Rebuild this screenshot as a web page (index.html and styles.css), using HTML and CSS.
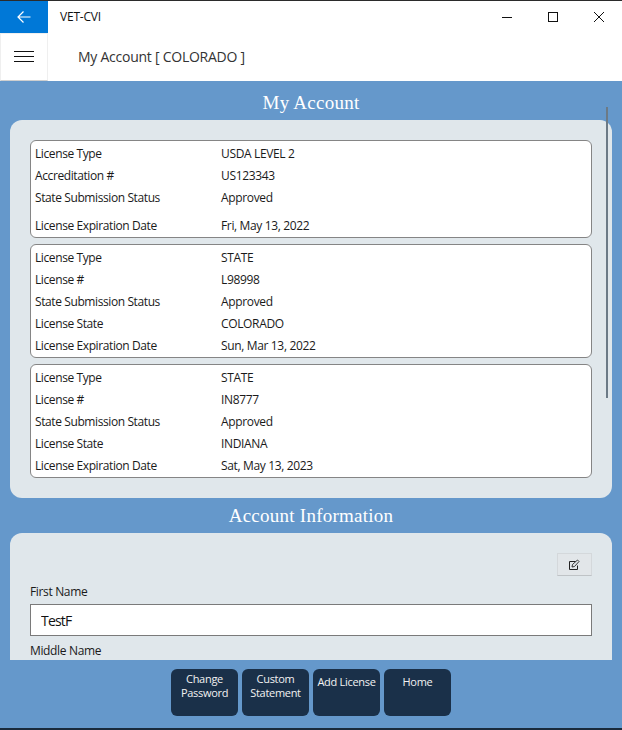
FILE: index.html
```html
<!DOCTYPE html>
<html lang="en">
<head>
<meta charset="utf-8">
<title>VET-CVI</title>
<link rel="stylesheet" href="styles.css">
</head>
<body>
<div class="window">
  <header class="titlebar">
    <button class="back" aria-label="Back">
      <svg width="16" height="16" viewBox="0 0 16 16" fill="none" stroke="#fff" stroke-width="1.2"><path d="M2 8h12.5M7.500 2.500 2 8l5.500 5.500"/></svg>
    </button>
    <span class="app-name">VET-CVI</span>
    <div class="controls">
      <svg width="46" height="32" viewBox="0 0 46 32" fill="none" stroke="#111" stroke-width="1"><path d="M18 16.500h10"/></svg>
      <svg width="46" height="32" viewBox="0 0 46 32" fill="none" stroke="#111" stroke-width="1"><rect x="18.500" y="11.500" width="9" height="9"/></svg>
      <svg width="46" height="32" viewBox="0 0 46 32" fill="none" stroke="#111" stroke-width="1"><path d="M18 11l10 10M28 11 18 21"/></svg>
    </div>
  </header>
  <div class="appbar">
    <button class="menu" aria-label="Menu">
      <svg width="20" height="12" viewBox="0 0 20 12" stroke="#111" stroke-width="1"><path d="M0 .5h20M0 5.500h20M0 10.500h20"/></svg>
    </button>
    <h1 class="page-title">My Account [ COLORADO ]</h1>
  </div>
  <main class="content">
    <div class="scroller">
      <h2 class="section-title">My Account</h2>
      <section class="card licenses">
        <dl class="license first">
          <div class="row"><dt>License Type</dt><dd>USDA LEVEL 2</dd></div>
          <div class="row"><dt>Accreditation #</dt><dd>US123343</dd></div>
          <div class="row"><dt>State Submission Status</dt><dd>Approved</dd></div>
          <div class="row"><dt>License Expiration Date</dt><dd>Fri, May 13, 2022</dd></div>
        </dl>
        <dl class="license">
          <div class="row"><dt>License Type</dt><dd>STATE</dd></div>
          <div class="row"><dt>License #</dt><dd>L98998</dd></div>
          <div class="row"><dt>State Submission Status</dt><dd>Approved</dd></div>
          <div class="row"><dt>License State</dt><dd>COLORADO</dd></div>
          <div class="row"><dt>License Expiration Date</dt><dd>Sun, Mar 13, 2022</dd></div>
        </dl>
        <dl class="license">
          <div class="row"><dt>License Type</dt><dd>STATE</dd></div>
          <div class="row"><dt>License #</dt><dd>IN8777</dd></div>
          <div class="row"><dt>State Submission Status</dt><dd>Approved</dd></div>
          <div class="row"><dt>License State</dt><dd>INDIANA</dd></div>
          <div class="row"><dt>License Expiration Date</dt><dd>Sat, May 13, 2023</dd></div>
        </dl>
      </section>
      <h2 class="section-title second">Account Information</h2>
      <section class="card account">
        <div class="edit-row">
          <button class="edit" aria-label="Edit">
            <svg width="12" height="12" viewBox="1 0 12 12" fill="none" stroke="#222" stroke-width="1"><path d="M7.500 2.500H1.500v8h8V6.500"/><path d="M4 8l.5-2.500L9.500 1 11 2.500 6.500 7.500z" stroke-width=".9"/></svg>
          </button>
        </div>
        <label class="field-label" for="first">First Name</label>
        <input class="field" id="first" value="TestF">
        <label class="field-label" for="middle">Middle Name</label>
        <input class="field" id="middle">
      </section>
    </div>
    <div class="scrollbar"></div>
    <nav class="actions">
      <button class="action">Change<br>Password</button>
      <button class="action">Custom<br>Statement</button>
      <button class="action lower">Add License</button>
      <button class="action lower">Home</button>
    </nav>
  </main>
</div>
</body>
</html>
```

FILE: styles.css
```css
* { box-sizing: border-box; }
html, body { margin: 0; height: 100%; }
body {
  font-family: "Open Sans", "Noto Sans", sans-serif;
  font-size: 12px;
  color: #1a1a1a;
  overflow: hidden;
}
.window {
  height: 730px;
  display: flex;
  flex-direction: column;
  border-top: 1px solid #2b2b2b;
  border-bottom: 2px solid #1a2b3c;
  background: #fff;
}
button { font-family: inherit; }
.titlebar { height: 32px; display: flex; align-items: center; flex: none; }
.back {
  width: 48px; height: 32px; background: #0078d7; border: 0; padding: 0;
  display: flex; align-items: center; justify-content: center;
}
.app-name { margin: -1px 0 0 12px; font-size: 12px; letter-spacing: -0.2px; color: #111; }
.controls { margin-left: auto; display: flex; height: 32px; }
.controls svg { display: block; }
.appbar { height: 48px; display: flex; align-items: center; flex: none; }
.menu {
  width: 48px; height: 48px; background: #fff; padding: 0;
  border: 1px solid #efefef; border-bottom: 1px solid #cfcfcf;
  display: flex; align-items: center; justify-content: center;
}
.page-title { margin: -2px 0 0 30px; font-size: 14px; font-weight: 400; color: #333; letter-spacing: -0.25px; }
.content {
  flex: 1; min-height: 0; background: #6598cb; position: relative;
  display: flex; flex-direction: column;
}
.scroller { height: 579px; overflow: hidden; padding: 0 10px; flex: none; }
.section-title {
  margin: 0; height: 39px; padding-top: 10px; text-align: center;
  font-family: "Liberation Serif", serif; font-size: 19px; line-height: 24px;
  letter-spacing: 0.25px; font-weight: 400; color: #fff;
}
.section-title.second { height: 35px; padding-top: 6px; }
.card { background: #e0e7eb; border-radius: 12px; padding: 20px; }
.licenses { display: flex; flex-direction: column; gap: 6px; height: 378px; }
.account { border-radius: 12px 12px 0 0; height: 200px; }
.license {
  margin: 0; background: #fff; border: 1px solid #858585; border-radius: 6px;
  padding: 1px 0 0 4px; height: 114px;
}
.license.first { height: 98px; }
.row { display: flex; height: 22px; align-items: center; letter-spacing: -0.4px; }
.first .row:nth-child(3) { height: 28px; padding-bottom: 6px; }
dt { width: 186px; flex: none; }
dd { margin: 0; letter-spacing: -0.35px; }
.edit-row { display: flex; justify-content: flex-end; }
.edit {
  width: 35px; height: 23px; background: #e2e6e9; border: 1px solid #d4d8db;
  border-bottom-color: #bfc3c6; padding: 0;
  display: flex; align-items: center; justify-content: center;
}
.field-label { display: block; letter-spacing: -0.35px; margin-top: 7px; line-height: 17px; }
.field-label + .field { margin-top: 4px; }
.field {
  display: block; width: 100%; height: 32px; border: 1px solid #7a7a7a; background: #fff;
  padding: 0 10px; font-family: inherit; font-size: 14px; letter-spacing: -0.8px; color: #111; outline: none;
}
.field-label[for="middle"] { margin-top: 6px; }
.actions { display: flex; justify-content: center; gap: 4px; padding-top: 9px; }
.action {
  width: 67px; height: 47px; background: #1a3049; color: #f2f2f2; border: 0; border-radius: 6px;
  font-size: 11px; line-height: 14px; padding: 3px 0 0; letter-spacing: -0.3px;
  white-space: nowrap; text-align: center;
  display: flex; flex-direction: column; align-items: center;
}
.action.lower { padding-top: 6px; }
.scrollbar {
  position: absolute; left: 606px; top: 26px; width: 2px; height: 291px; background: #6c7a86;
}
```
